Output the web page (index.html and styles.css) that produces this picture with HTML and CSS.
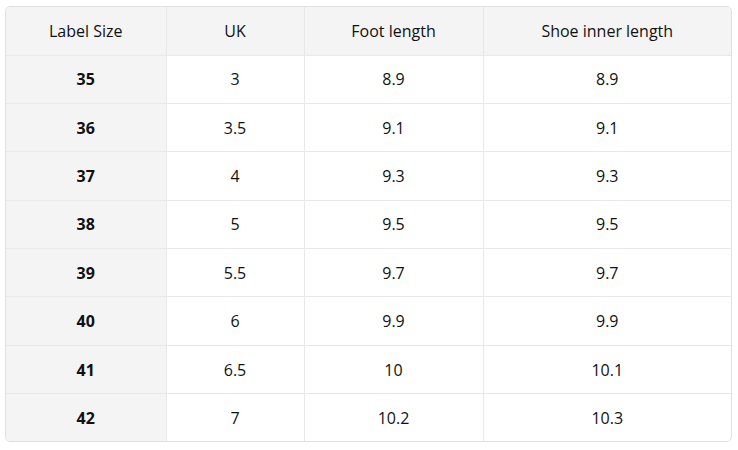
FILE: index.html
```html
<!DOCTYPE html>
<html>
<head>
<meta charset="utf-8">
<link rel="stylesheet" href="styles.css">
</head>
<body>
<div class="wrap">
<table class="sizes">
<colgroup><col class="c1"><col class="c2"><col class="c3"><col class="c4"></colgroup>
<thead>
<tr><th>Label Size</th><th>UK</th><th>Foot length</th><th>Shoe inner length</th></tr>
</thead>
<tbody>
<tr><td class="lab">35</td><td>3</td><td>8.9</td><td>8.9</td></tr>
<tr><td class="lab">36</td><td>3.5</td><td>9.1</td><td>9.1</td></tr>
<tr><td class="lab">37</td><td>4</td><td>9.3</td><td>9.3</td></tr>
<tr><td class="lab">38</td><td>5</td><td>9.5</td><td>9.5</td></tr>
<tr><td class="lab">39</td><td>5.5</td><td>9.7</td><td>9.7</td></tr>
<tr><td class="lab">40</td><td>6</td><td>9.9</td><td>9.9</td></tr>
<tr><td class="lab">41</td><td>6.5</td><td>10</td><td>10.1</td></tr>
<tr><td class="lab">42</td><td>7</td><td>10.2</td><td>10.3</td></tr>
</tbody>
</table>
</div>
</body>
</html>
```
FILE: styles.css
```css
html, body { margin: 0; padding: 0; background: #fff; }
body { padding: 6px 0 0 5px; font-family: "Open Sans", "Noto Sans", sans-serif; font-size: 16px; color: #111; }
.wrap { width: 725px; border: 1px solid #e0e0e0; border-radius: 5px; overflow: hidden; }
.sizes { width: 100%; border-collapse: collapse; table-layout: fixed; }
.c1 { width: 160px; }
.c2 { width: 138px; }
.c3 { width: 179px; }
.sizes th, .sizes td { padding: 0; text-align: center; vertical-align: middle; border-right: 1px solid #e8e8e8; border-bottom: 1px solid #e8e8e8; box-sizing: border-box; }
.sizes th { height: 48px; }
.sizes td { height: 48.4px; }
.sizes tbody tr:last-child td { height: 47.5px; }
.sizes th:last-child, .sizes td:last-child { border-right: none; }
.sizes tbody tr:last-child td { border-bottom: none; }
.sizes th { font-weight: 400; background: #f4f4f4; }
.sizes td.lab { font-weight: 700; background: #f4f4f4; }
```
